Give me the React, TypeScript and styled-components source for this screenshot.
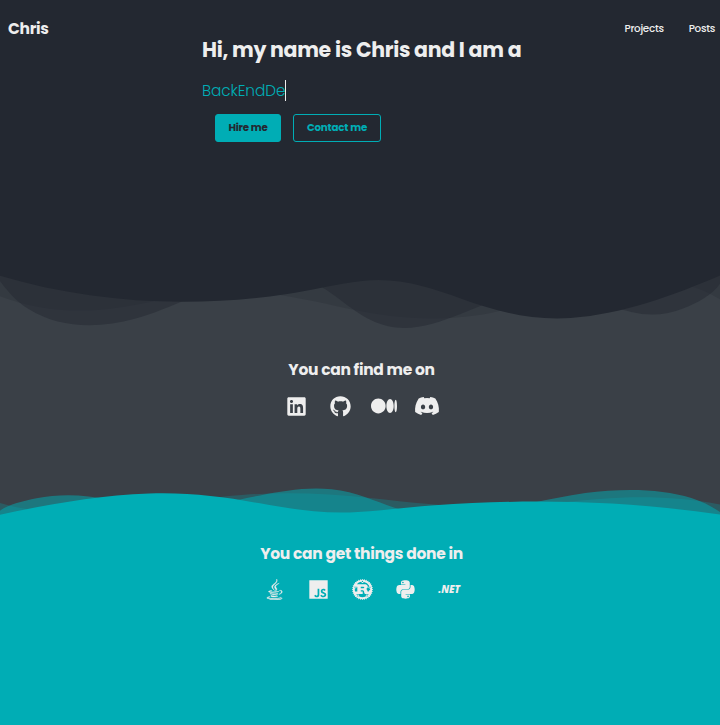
import React from "react";
import styled, { createGlobalStyle } from "styled-components";
import { FaLinkedin, FaGithub, FaMedium, FaDiscord, FaJava, FaJs, FaRust, FaPython } from "react-icons/fa6";

const palette = { dark: "#232831", slate: "#3a4047", teal: "#00adb5", light: "#eeeeee" };

const GlobalStyle = createGlobalStyle`
  * { box-sizing: border-box; }
  html, body { margin: 0; background: ${palette.teal}; }
  body { font-family: Poppins, Inter, "Open Sans", sans-serif; color: ${palette.light}; overflow: hidden; }
`;

const Page = styled.div`
  display: flex;
  flex-direction: column;
  height: 725px;
`;

const Hero = styled.section`
  height: 273px;
  background: ${palette.dark};
`;

const NavBar = styled.nav`
  display: flex;
  align-items: center;
  height: 38px;
  padding: 19px 5px 0 8px;
`;

const Brand = styled.a`
  font-size: 15.5px;
  line-height: 20px;
  font-weight: 700;
  letter-spacing: -0.3px;
  margin-right: auto;
`;

const NavLink = styled.a`
  font-size: 10.4px;
  font-weight: 500;
  letter-spacing: -0.3px;
  margin-left: 25px;
`;

const Intro = styled.div`
  padding-left: 202px;
`;

const Headline = styled.h1`
  margin: 0;
  font-size: 20.5px;
  line-height: 24px;
  font-weight: 700;
  letter-spacing: -0.31px;
  white-space: nowrap;
`;

const Typed = styled.div`
  display: flex;
  align-items: center;
  height: 22px;
  margin-top: 17px;
  color: ${palette.teal};
  font-size: 15.3px;
  font-weight: 300;
  letter-spacing: -0.1px;
`;

const Caret = styled.span`
  width: 1px;
  height: 21px;
  background: ${palette.light};
`;

const Actions = styled.div`
  display: flex;
  gap: 12px;
  margin: 13px 0 0 13px;
`;

const Button = styled.button<{ $filled?: boolean; $width: number }>`
  width: ${({ $width }) => $width}px;
  height: 28px;
  padding: 0 0 1px;
  border: 1px solid ${palette.teal};
  border-radius: 3px;
  background: ${({ $filled }) => ($filled ? palette.teal : "transparent")};
  color: ${({ $filled }) => ($filled ? palette.dark : palette.teal)};
  font: 700 10.3px Poppins, Inter, sans-serif;
  letter-spacing: -0.22px;
  white-space: nowrap;
`;

const Social = styled.section`
  display: flex;
  flex-direction: column;
  align-items: center;
  height: 243px;
  background: ${palette.slate};
`;

const Skills = styled.section`
  display: flex;
  flex-direction: column;
  align-items: center;
  flex: 1;
  padding-top: 28px;
  background: ${palette.teal};
`;

const WaveSvg = styled.svg<{ $height: number; $flipped?: boolean }>`
  display: block;
  flex: none;
  width: 100%;
  height: ${({ $height }) => $height}px;
  transform: ${({ $flipped }) => ($flipped ? "rotate(180deg)" : "none")};
  margin-top: ${({ $flipped }) => ($flipped ? "auto" : "0")};
`;

const Title = styled.h2<{ $top?: number }>`
  margin: ${({ $top = 0 }) => $top}px 0 0 3px;
  font-size: 15.5px;
  line-height: 20px;
  font-weight: 700;
  letter-spacing: -0.29px;
`;

const IconRow = styled.div<{ $top: number }>`
  display: flex;
  margin: ${({ $top }) => $top}px 0 0 4px;
`;

const IconCell = styled.a<{ $size?: number }>`
  display: flex;
  align-items: center;
  justify-content: center;
  width: 43.6px;
  height: 24px;
  svg {
    flex: none;
    width: auto;
    height: ${({ $size = 21 }) => $size}px;
  }
`;

const JavaMark = styled(FaJava)`
  stroke: ${palette.light};
  stroke-width: 10px;
`;

const DotNet = styled.span`
  font: italic 800 10px "Open Sans", sans-serif;
  letter-spacing: -0.1px;
`;

function Wave({ color, height, flipped }: { color: string; height: number; flipped?: boolean }) {
  return (
    <WaveSvg $height={height} $flipped={flipped} viewBox="0 0 1200 120" preserveAspectRatio="none" fill={color}>
      <path opacity=".25" d="M0,0V46.29c47.79,22.2,103.59,32.17,158,28,70.36-5.37,136.33-33.31,206.8-37.5C438.64,32.43,512.34,53.67,583,72.05c69.27,18,138.3,24.88,209.4,13.08,36.15-6,69.85-17.84,104.45-29.34C989.49,25,1113-14.29,1200,52.47V0Z" />
      <path opacity=".5" d="M0,0V15.81C13,36.92,27.64,56.86,47.69,72.05,99.41,111.27,165,111,224.58,91.58c31.15-10.15,60.09-26.07,89.67-39.8,40.92-19,84.73-46,130.83-49.67,36.26-2.85,70.9,9.42,98.6,31.56,31.77,25.39,62.32,62,103.63,73,40.44,10.79,81.35-6.69,119.13-24.28s75.16-39,116.92-43.05c59.73-5.85,113.28,22.88,168.9,38.84,30.2,8.66,59,6.17,87.09-7.5,22.43-10.89,48-26.93,60.65-49.24V0Z" />
      <path d="M0,0V5.63C149.93,59,314.09,71.32,475.83,42.57c43-7.64,84.23-20.12,127.61-26.46,59-8.63,112.48,12.24,165.56,35.4C827.93,77.22,886,95.24,951.2,90c86.53-7,172.46-45.71,248.8-84.81V0Z" />
    </WaveSvg>
  );
}

export default function App() {
  return (
    <Page>
      <GlobalStyle />
      <Hero>
        <NavBar>
          <Brand>Chris</Brand>
          <NavLink>Projects</NavLink>
          <NavLink>Posts</NavLink>
        </NavBar>
        <Intro>
          <Headline>Hi, my name is Chris and I am a</Headline>
          <Typed>
            BackEndDe
            <Caret />
          </Typed>
          <Actions>
            <Button $filled $width={66}>Hire me</Button>
            <Button $width={88}>Contact me</Button>
          </Actions>
        </Intro>
      </Hero>
      <Social>
        <Wave color={palette.dark} height={60} />
        <Title $top={27}>You can find me on</Title>
        <IconRow $top={14}>
          <IconCell><FaLinkedin /></IconCell>
          <IconCell><FaGithub /></IconCell>
          <IconCell $size={26}><FaMedium /></IconCell>
          <IconCell $size={26}><FaDiscord /></IconCell>
        </IconRow>
        <Wave color={palette.teal} height={30} flipped />
      </Social>
      <Skills>
        <Title>You can get things done in</Title>
        <IconRow $top={13}>
          <IconCell><JavaMark /></IconCell>
          <IconCell><FaJs /></IconCell>
          <IconCell><FaRust /></IconCell>
          <IconCell><FaPython /></IconCell>
          <IconCell><DotNet>.NET</DotNet></IconCell>
        </IconRow>
      </Skills>
    </Page>
  );
}
